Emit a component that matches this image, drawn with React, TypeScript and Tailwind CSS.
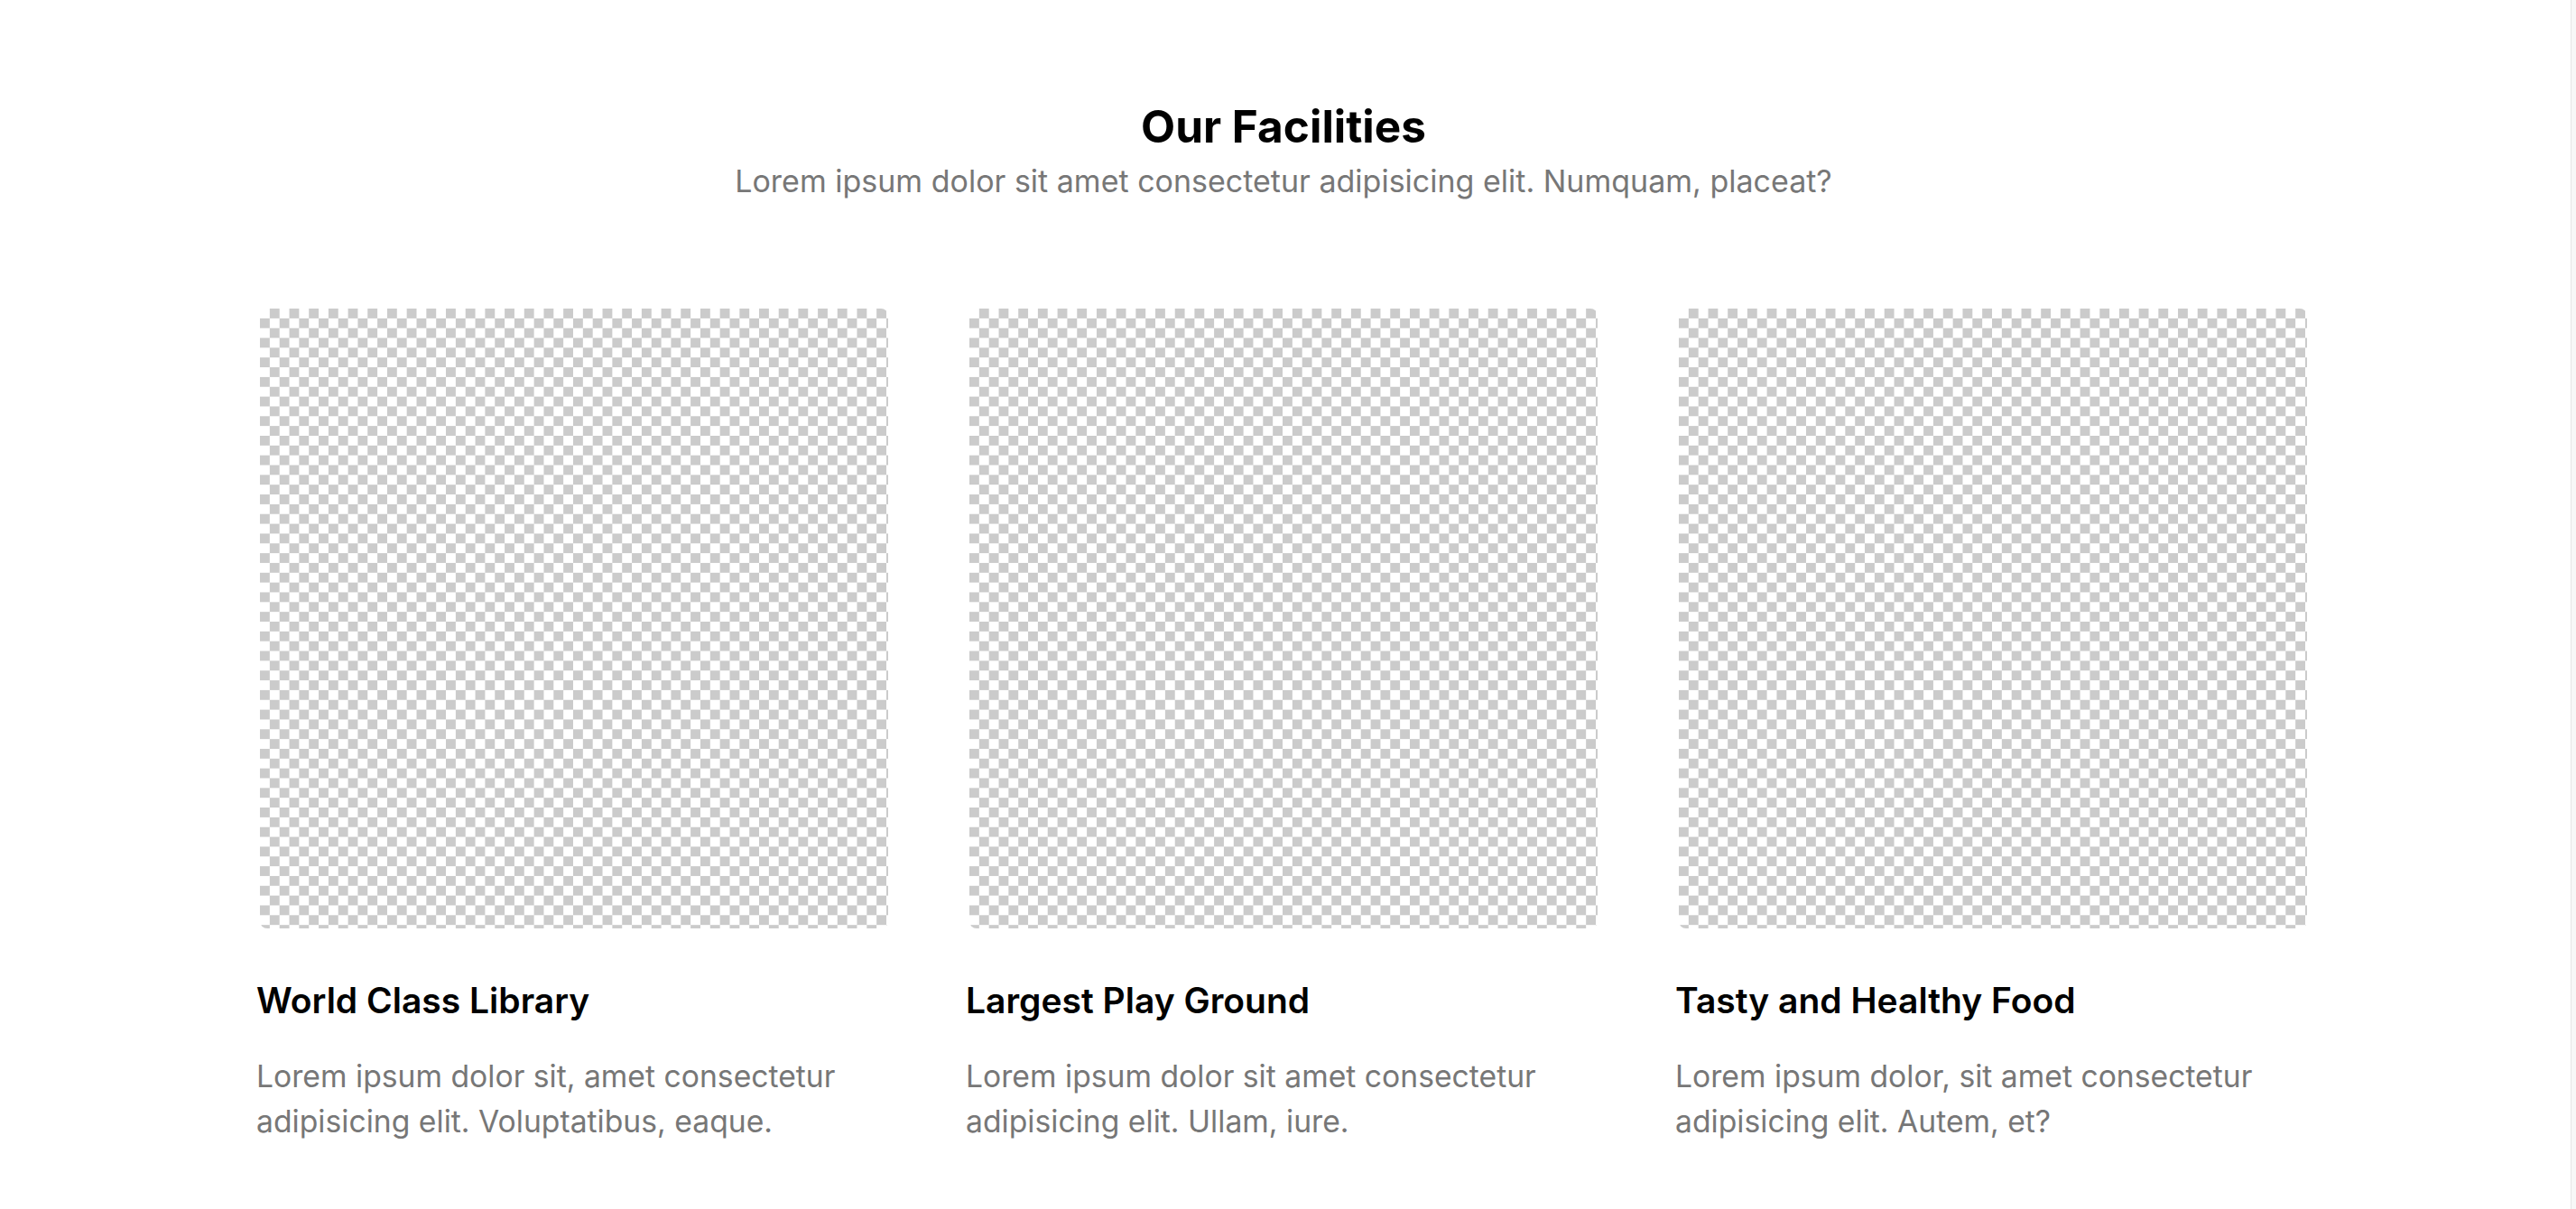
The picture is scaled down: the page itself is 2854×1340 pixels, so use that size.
import React from "react";

const cards = [
  { title: "World Class Library", text: "Lorem ipsum dolor sit, amet consectetur adipisicing elit. Voluptatibus, eaque." },
  { title: "Largest Play Ground", text: "Lorem ipsum dolor sit amet consectetur adipisicing elit. Ullam, iure." },
  { title: "Tasty and Healthy Food", text: "Lorem ipsum dolor, sit amet consectetur adipisicing elit. Autem, et?" },
];

export default function App() {
  return (
    <div className="flex min-h-screen w-full bg-white" style={{ fontFamily: 'Inter, "Open Sans", sans-serif' }}>
      <main className="flex flex-1 flex-col items-center pr-[4px] pt-[116px]">
        <h2 className="text-[49.5px] font-bold leading-none text-black">Our Facilities</h2>
        <p className="mt-[18px] text-[34px] leading-none text-[#777777]">
          Lorem ipsum dolor sit amet consectetur adipisicing elit. Numquam, placeat?
        </p>
        <div className="mt-[124px] grid grid-cols-[704px_704px_704px] gap-x-[82px]">
          {cards.map((c) => (
            <div key={c.title} className="flex flex-col">
              <div className="mx-[4px] h-[687px] rounded-lg bg-[conic-gradient(#cbcbcb_25%,#ffffff_0_50%,#cbcbcb_0_75%,#ffffff_0)] bg-[length:21.7px_21.7px]" />
              <h3 className="mt-[60px] text-[39px] font-semibold leading-none text-black">{c.title}</h3>
              <p className="mt-[40px] text-[33.7px] leading-[50px] text-[#777777]">{c.text}</p>
            </div>
          ))}
        </div>
      </main>
      <div className="w-[6px] border-l border-[#e6e6e6] bg-[#f7f7f7]" />
    </div>
  );
}
